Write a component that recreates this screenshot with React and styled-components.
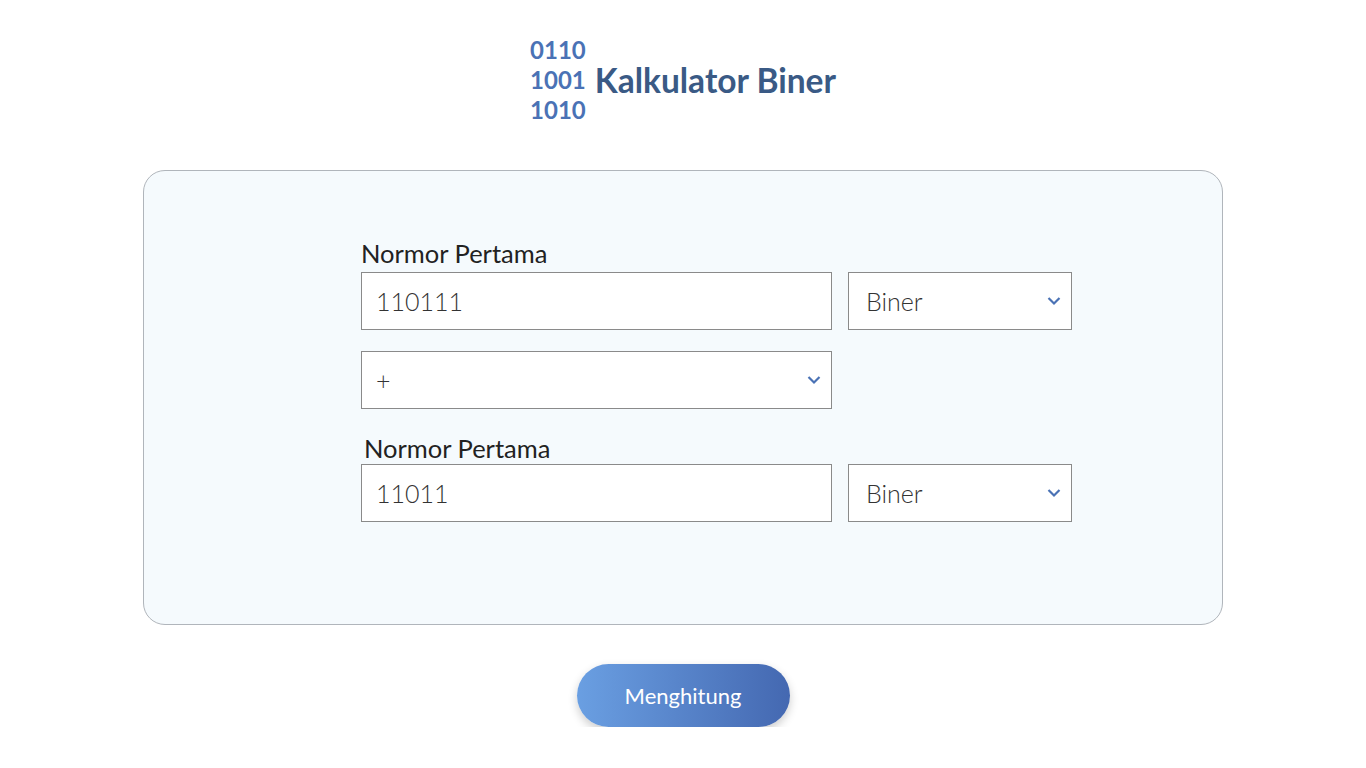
import { useState } from "react";
import styled, { createGlobalStyle } from "styled-components";

const GlobalStyle = createGlobalStyle`
  * { box-sizing: border-box; }
  body {
    margin: 0;
    background: #ffffff;
    font-family: Lato, "Open Sans", sans-serif;
    color: #222;
  }
`;

const Page = styled.main`
  display: flex;
  flex-direction: column;
  align-items: center;
  padding-top: 35px;
`;

const Header = styled.header`
  display: flex;
  align-items: center;
  gap: 9px;
  margin-bottom: 45px;
`;

const BinaryStack = styled.div`
  display: flex;
  flex-direction: column;
  font-size: 24px;
  font-weight: 700;
  line-height: 30px;
  color: #4a72b5;
`;

const Title = styled.h1`
  margin: 0;
  font-size: 33.5px;
  font-weight: 700;
  color: #3a5a85;
`;

const Card = styled.section`
  width: 1080px;
  height: 455px;
  background: #f5fafd;
  border: 1px solid #b0b5bb;
  border-radius: 22px;
  padding: 69px 0 0 217px;
`;

const Label = styled.label`
  display: block;
  font-size: 25.5px;
  line-height: 26px;
  margin: ${(p) => (p.$second ? "26px 0 3px 3px" : "0 0 6px 0")};
  color: #222;
`;

const Row = styled.div`
  display: flex;
  gap: 16px;
`;

const TextInput = styled.input`
  width: 471px;
  height: 58px;
  border: 1px solid #8a8a8a;
  background: #fff;
  padding: 0 14px;
  font-family: Lato, "Open Sans", sans-serif;
  font-size: 25px;
  font-weight: 300;
  color: #333;
  outline: none;
`;

const SelectWrap = styled.div`
  position: relative;
  width: ${(p) => p.$w}px;
  margin-top: ${(p) => p.$mt || 0}px;
`;

const Select = styled.select`
  appearance: none;
  width: 100%;
  height: 58px;
  border: 1px solid #8a8a8a;
  border-radius: 0;
  background: #fff;
  padding: 0 ${(p) => (p.$pad ? 14 : 17)}px;
  font-family: Lato, "Open Sans", sans-serif;
  font-size: 25px;
  font-weight: 300;
  color: #333;
  outline: none;
`;

const Chevron = styled.svg`
  position: absolute;
  right: 10px;
  top: 23px;
  pointer-events: none;
`;

const Button = styled.button`
  margin-top: 39px;
  width: 213px;
  height: 63px;
  border: none;
  border-radius: 32px;
  background: linear-gradient(90deg, #6a9fe2 0%, #4468b1 100%);
  box-shadow: 0 4px 10px rgba(0, 0, 0, 0.2);
  color: #fff;
  font-family: Lato, "Open Sans", sans-serif;
  font-size: 22px;
  cursor: pointer;
`;

const Arrow = () => (
  <Chevron width="16" height="11" viewBox="0 0 16 11">
    <path d="M2.5 3 L8 8.5 L13.5 3" fill="none" stroke="#4a72b5" strokeWidth="2.2" />
  </Chevron>
);

const DropDown = ({ width, value, onChange, options, mt, pad }) => (
  <SelectWrap $w={width} $mt={mt}>
    <Select value={value} onChange={onChange} $pad={pad}>
      {options.map((o) => (
        <option key={o}>{o}</option>
      ))}
    </Select>
    <Arrow />
  </SelectWrap>
);

export default function App() {
  const [a, setA] = useState("110111");
  const [b, setB] = useState("11011");
  const [baseA, setBaseA] = useState("Biner");
  const [baseB, setBaseB] = useState("Biner");
  const [op, setOp] = useState("+");
  const bases = ["Biner", "Desimal", "Oktal", "Heksadesimal"];

  return (
    <Page>
      <GlobalStyle />
      <Header>
        <BinaryStack>
          <span>0110</span>
          <span>1001</span>
          <span>1010</span>
        </BinaryStack>
        <Title>Kalkulator Biner</Title>
      </Header>
      <Card>
        <Label>Normor Pertama</Label>
        <Row>
          <TextInput value={a} onChange={(e) => setA(e.target.value)} />
          <DropDown width={224} value={baseA} onChange={(e) => setBaseA(e.target.value)} options={bases} />
        </Row>
        <DropDown width={471} mt={21} pad value={op} onChange={(e) => setOp(e.target.value)} options={["+", "-", "×", "÷"]} />
        <Label $second>Normor Pertama</Label>
        <Row>
          <TextInput value={b} onChange={(e) => setB(e.target.value)} />
          <DropDown width={224} value={baseB} onChange={(e) => setBaseB(e.target.value)} options={bases} />
        </Row>
      </Card>
      <Button>Menghitung</Button>
    </Page>
  );
}
